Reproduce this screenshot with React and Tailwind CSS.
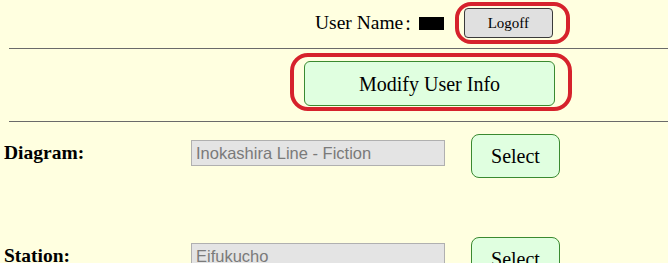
import React from 'react';

const serif = { fontFamily: '"Liberation Serif", "Noto Sans CJK JP", serif' };

const FieldRow = ({ label, value }) => (
  <div className="flex items-start h-[44px]">
    <div className="w-[191px] pl-[4px] mt-[6px] font-bold text-[19.5px] leading-[26px] text-black">{label}</div>
    <input
      type="text"
      readOnly
      value={value}
      className="mt-[6px] w-[254px] h-[26px] bg-[#e4e4e4] border border-[#b0b0b0] px-[4px] text-[16.5px] text-[#7a7a7a] outline-none"
      style={{ fontFamily: '"Liberation Sans", Arial, sans-serif' }}
    />
    <button className="ml-[26px] w-[89px] h-[44px] bg-[#e0ffe0] border border-[#3a8a30] rounded-[8px] text-[20px] text-black">
      Select
    </button>
  </div>
);

export default function App() {
  return (
    <div className="h-screen w-full bg-[#ffffe0] overflow-hidden" style={serif}>
      <div className="flex items-center pt-[2px] pl-[315px]">
        <span className="text-[19.5px] text-black leading-none">User Name</span>
        <span className="ml-[2px] text-[20px] text-black leading-none">:</span>
        <span className="ml-[8px] w-[25px] h-[13px] bg-black mt-[1px]"></span>
        <div className="ml-[11px] w-[115px] h-[42px] border-[4px] border-[#d6222c] rounded-[16px] pl-[5px] pt-[2px]">
          <button className="w-[89px] h-[30px] bg-[#e0e0e0] border border-[#3a3a3a] rounded-[4px] text-[15px] text-black">
            Logoff
          </button>
        </div>
      </div>
      <div className="mt-[4px] ml-[9px] border-t border-[#6a6a6a]"></div>
      <div className="mt-[4px] ml-[290px] w-[282px] h-[58px] border-[4px] border-[#d6222c] rounded-[18px] pl-[10px] pt-[4px]">
        <button className="w-[251px] h-[45px] bg-[#e0ffe0] border border-[#3a8a30] rounded-[6px] text-[20px] text-black">
          Modify User Info
        </button>
      </div>
      <div className="mt-[10px] ml-[9px] border-t border-[#6a6a6a]"></div>
      <div className="pt-[12px] flex flex-col gap-[59px]">
        <FieldRow label="Diagram:" value="Inokashira Line - Fiction" />
        <FieldRow label="Station:" value="Eifukucho" />
      </div>
    </div>
  );
}
